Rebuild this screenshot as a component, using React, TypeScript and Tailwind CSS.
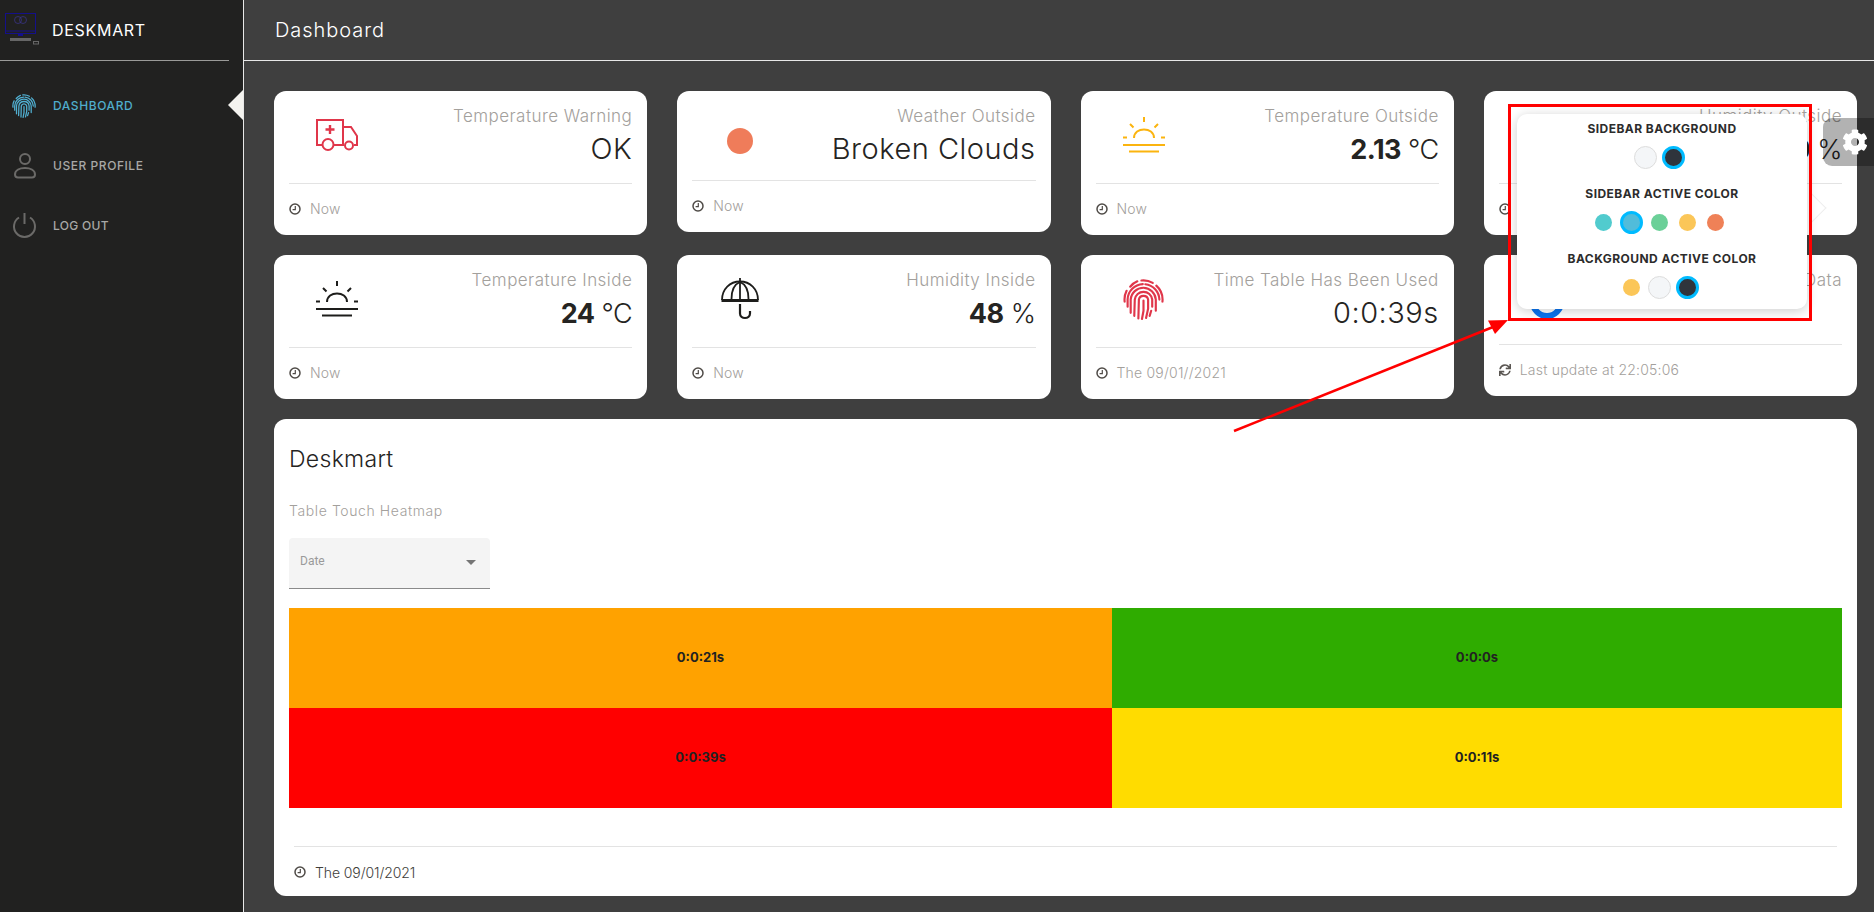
import type { ReactNode } from "react";
import { FaCog, FaSync } from "react-icons/fa";

const FONT = "[font-family:Inter,'Liberation_Sans',sans-serif]";

function ClockIcon({ className = "" }: { className?: string }) {
  return (
    <svg viewBox="0 0 12 12" className={`w-[12px] h-[12px] ${className}`} fill="none" stroke="#4f4b47">
      <circle cx="6" cy="6" r="5" strokeWidth="1.5" />
      <path d="M6.300 3V6.600H3.600" strokeWidth="1.200" />
    </svg>
  );
}

function FingerprintIcon({ color, className = "" }: { color: string; className?: string }) {
  return (
    <svg viewBox="0 0 40 40" className={className} fill="none" stroke={color} strokeWidth="2.100" strokeLinecap="round">
      <path d="M7 7.500A18.500 18.500 0 0 1 14 2.300" />
      <path d="M18 1.500A18.500 18.500 0 0 1 29 3.800" />
      <path d="M32.500 6.500A18.500 18.500 0 0 1 38.500 22" />
      <path d="M1.600 22A18.500 18.500 0 0 1 3.500 11.500" />
      <path d="M4.500 27V20A15.500 15.500 0 0 1 20 5A15.500 15.500 0 0 1 35.500 20V27" strokeDasharray="30 2.500 22" />
      <path d="M7.500 33V20A12.500 12.500 0 0 1 20 8.500A12.500 12.500 0 0 1 32 20V31" />
      <path d="M11 36L11.500 20A8.500 8.500 0 0 1 20 12.500A8.500 8.500 0 0 1 28.500 20V27M27.500 31L26 36" />
      <path d="M15 38.500L15.500 20A4.500 4.500 0 0 1 20 16.500A4.500 4.500 0 0 1 24.500 20V29L22.500 38" />
      <path d="M20 21V31L18.500 39" />
    </svg>
  );
}

function SunriseIcon({ color }: { color: string }) {
  return (
    <svg viewBox="0 0 42 36" className="w-[42px] h-[36px]" fill="none" stroke={color} strokeWidth="2">
      <path d="M21 0V5M7 7L10.500 10.500M35 7L31.500 10.500" />
      <path d="M11 21C11 9.500 31 9.500 31 21" />
      <path d="M0 20.500H4M38 20.500H42" />
      <path d="M0 28H42" />
      <path d="M6 34.500H36" />
    </svg>
  );
}

function AmbulanceIcon() {
  return (
    <svg viewBox="0 0 42 32" className="w-[42px] h-[32px]" fill="none" stroke="#e0364a" strokeWidth="2">
      <path d="M6 26H1V1H27V8H35L41 17V26H38" />
      <path d="M18 26H27V8M27 26H28" />
      <path d="M14 6V15M9.500 10.500H18.500" strokeWidth="2.400" />
      <circle cx="12" cy="25.500" r="5.500" fill="#fff" />
      <circle cx="33" cy="26.500" r="4" fill="#fff" />
    </svg>
  );
}

function UmbrellaIcon() {
  return (
    <svg viewBox="0 0 38 42" className="w-[38px] h-[42px]" fill="none" stroke="#1d1d1b" strokeWidth="1.800">
      <path d="M19 0V4" />
      <path d="M1 22C1 11 9 3.500 19 3.500S37 11 37 22" />
      <path d="M0.500 22.500H37.500" strokeWidth="3" />
      <path d="M10.500 21C10.500 12 14 6 19 4C24 6 27.500 12 27.500 21" />
      <path d="M19 4V21" />
      <path d="M19 26V35.500C19 41.500 29 41.500 29 35.500V33" strokeWidth="2.200" />
    </svg>
  );
}

type CardProps = {
  icon: ReactNode;
  title: string;
  value: ReactNode;
  footer: string;
  footerIcon?: ReactNode;
  bodyClass?: string;
  iconClass?: string;
};

function StatCard({ icon, title, value, footer, footerIcon, bodyClass = "h-[92px]", iconClass = "pt-[44px]" }: CardProps) {
  return (
    <div className="bg-white rounded-[12px] px-[15px]">
      <div className={`flex justify-between ${bodyClass}`}>
        <div className={`w-[96px] shrink-0 flex justify-center ${iconClass}`}>
          <div className="h-0 flex items-center">{icon}</div>
        </div>
        <div className="text-right pt-[14px]">
          <div className="text-[17px] leading-[22px] font-light text-[#a3a09c] tracking-[0.45px] whitespace-nowrap">{title}</div>
          <div className="text-[29px] leading-[34px] mt-[5px] font-light text-[#252422] tracking-[0.5px] whitespace-nowrap">{value}</div>
        </div>
      </div>
      <div className="border-t border-[#e3e3e3] h-[52px] pb-[2px] flex items-center gap-[8px] text-[14px] font-light text-[#a3a09c] tracking-[0.2px]">
        {footerIcon ?? <ClockIcon />}
        <span className="ml-[1px]">{footer}</span>
      </div>
    </div>
  );
}

function Bold({ n, unit }: { n: string; unit: string }) {
  return (
    <span className="text-[27px] tracking-[-0.5px]">
      <span className="font-bold">{n}</span> {unit}
    </span>
  );
}

function Swatch({ color, active = false, light = false }: { color: string; active?: boolean; light?: boolean }) {
  const size = active ? "w-[23px] h-[23px] border-[3px] border-[#00bbff]" : light ? "w-[23px] h-[23px] border border-[#dddddd]" : "w-[17px] h-[17px]";
  return (
    <div className="w-[28px] flex justify-center items-center">
      <div className={`rounded-full ${size}`} style={{ backgroundColor: color }} />
    </div>
  );
}

function SettingsPanel() {
  const heading = "text-[12px] leading-[16px] font-bold text-[#2c2c2c] text-center tracking-[0.45px] uppercase";
  const row = "flex justify-center items-center h-[23px] pr-[6px] mt-[9px]";
  return (
    <div className="absolute left-[1517px] top-[114px] w-[290px] h-[195px] bg-white rounded-[10px] shadow-[0_2px_12px_rgba(0,0,0,0.2)] pt-[7px]">
      <div className={heading}>Sidebar Background</div>
      <div className={row}>
        <Swatch color="#f4f6f8" light />
        <Swatch color="#2f343c" active />
      </div>
      <div className={`${heading} mt-[17px]`}>Sidebar Active Color</div>
      <div className={row}>
        <Swatch color="#51cbce" />
        <Swatch color="#51bcda" active />
        <Swatch color="#6bd098" />
        <Swatch color="#fbc658" />
        <Swatch color="#ef8157" />
      </div>
      <div className={`${heading} mt-[17px]`}>Background Active Color</div>
      <div className={row}>
        <Swatch color="#fbc658" />
        <Swatch color="#f4f6f8" light />
        <Swatch color="#2f343c" active />
      </div>
    </div>
  );
}

export default function App() {
  const navIconStroke = "#6b6a68";
  return (
    <div className={`relative w-[1874px] h-[912px] overflow-hidden flex bg-[#3f3f3f] ${FONT}`}>
      {/* sidebar */}
      <aside className="w-[244px] shrink-0 bg-[#212120] border-r border-[#e8e8e8]">
        <div className="h-[61px] w-[229px] border-b border-[#9a9a98] flex items-center pl-[5px]">
          <svg viewBox="0 0 36 32" className="w-[36px] h-[32px] -mt-[2px]" fill="none">
            <rect x="0.500" y="0.500" width="30" height="20" stroke="#14108a" />
            <path d="M0.500 18H30.500" stroke="#14108a" />
            <circle cx="13" cy="7" r="3.500" stroke="#3b3590" strokeWidth="0.700" />
            <circle cx="18" cy="7" r="3.500" stroke="#3b3590" strokeWidth="0.700" />
            <path d="M13 21H18V23H13Z" fill="#14108a" />
            <rect x="5" y="25" width="21" height="3" fill="#666" />
            <rect x="28.500" y="28.500" width="5" height="2.500" stroke="#666" />
          </svg>
          <span className="ml-[11px] text-[16px] text-white tracking-[0.7px] font-normal">DESKMART</span>
        </div>
        <nav className="relative pt-[15px]">
          <div className="h-[60px] flex items-center">
            <FingerprintIcon color="#51b0d2" className="ml-[12px] w-[24px] h-[24px]" />
            <span className="ml-[17px] text-[12px] text-[#4fadcc] font-medium tracking-[0.6px]">DASHBOARD</span>
          </div>
          <div className="h-[60px] flex items-center">
            <svg viewBox="0 0 24 26" className="ml-[13px] w-[24px] h-[26px]" fill="none" stroke={navIconStroke} strokeWidth="2">
              <circle cx="12" cy="6" r="5" />
              <path d="M2 21.500C2 17 7 15 12 15S22 17 22 21.500C22 24 20 24.500 19 24.500H5C4 24.500 2 24 2 21.500Z" />
            </svg>
            <span className="ml-[16px] text-[12px] text-[#a8a8a6] font-medium tracking-[0.55px]">USER PROFILE</span>
          </div>
          <div className="h-[60px] flex items-center">
            <svg viewBox="0 0 24 26" className="ml-[12px] w-[25px] h-[26px]" fill="none" stroke={navIconStroke} strokeWidth="2">
              <path d="M12 0V11" />
              <path d="M6.500 4.500A10.500 10.500 0 1 0 17.500 4.500" />
            </svg>
            <span className="ml-[16px] text-[12px] text-[#a8a8a6] font-medium tracking-[0.3px]">LOG OUT</span>
          </div>
          <div className="absolute right-0 top-[29px] w-0 h-0 border-y-[15px] border-y-transparent border-r-[15px] border-r-[#f4f3ef]" />
        </nav>
      </aside>

      {/* main */}
      <main className="flex-1 min-w-0">
        <header className="h-[61px] border-b border-[#e8e8e8] flex items-center pl-[31px] text-[20px] text-white tracking-[0.95px] font-light">
          Dashboard
        </header>
        <div className="pl-[30px] pr-[17px] pt-[30px]">
          <div className="grid grid-cols-4 gap-x-[30px] gap-y-[20px] items-start">
            <StatCard icon={<AmbulanceIcon />} title="Temperature Warning" value="OK" footer="Now" />
            <StatCard
              icon={<div className="w-[26px] h-[26px] rounded-full bg-[#ef7c5a]" />}
              title="Weather Outside"
              value="Broken Clouds"
              footer="Now"
              bodyClass="h-[89px]"
              iconClass="pt-[50px]"
            />
            <StatCard icon={<SunriseIcon color="#fbb40f" />} title="Temperature Outside" value={<Bold n="2.13" unit="°C" />} footer="Now" />
            <StatCard icon={null} title="Humidity Outside" value={<Bold n="80" unit="%" />} footer="Now" />
            <StatCard icon={<SunriseIcon color="#1d1d1b" />} title="Temperature Inside" value={<Bold n="24" unit="°C" />} footer="Now" />
            <StatCard icon={<UmbrellaIcon />} title="Humidity Inside" value={<Bold n="48" unit="%" />} footer="Now" />
            <StatCard
              icon={<FingerprintIcon color="#e0364a" className="w-[41px] h-[41px]" />}
              title="Time Table Has Been Used"
              value="0:0:39s"
              footer="The 09/01//2021"
            />
            <StatCard
              icon={
                <svg viewBox="0 0 34 34" className="w-[34px] h-[34px] mt-[6px]" fill="none" stroke="#0a74f0" strokeWidth="6">
                  <circle cx="17" cy="17" r="14" />
                </svg>
              }
              title="Update Data"
              value=""
              footer="Last update at 22:05:06"
              footerIcon={<FaSync className="w-[12px] h-[12px] text-[#5a5652]" />}
              bodyClass="h-[89px]"
            />
          </div>

          <section className="mt-[20px] h-[477px] bg-white rounded-[12px] px-[15px]">
            <h2 className="pt-[25px] text-[23px] leading-[30px] font-light text-[#252422] tracking-[0.3px]">Deskmart</h2>
            <p className="mt-[27px] text-[14px] leading-[20px] font-light text-[#a3a09c] tracking-[0.6px]">Table Touch Heatmap</p>
            <div className="mt-[17px] w-[201px] h-[51px] bg-[#f4f4f4] rounded-t-[4px] border-b border-[#8a8a8a] flex justify-between pl-[11px] pr-[14px] pt-[16px] [font-family:Roboto,sans-serif]">
              <span className="text-[12px] leading-[14px] text-[#9a9a9a]">Date</span>
              <span className="mt-[6px] w-0 h-0 border-x-[5px] border-x-transparent border-t-[5px] border-t-[#757575]" />
            </div>
            <div className="mt-[19px] grid grid-cols-[823px_1fr] grid-rows-[100px_100px] text-[13px] font-bold text-[#222222]">
              <div className="bg-[#ffa200] flex items-center justify-center">0:0:21s</div>
              <div className="bg-[#2fac00] flex items-center justify-center">0:0:0s</div>
              <div className="bg-[#ff0000] flex items-center justify-center">0:0:39s</div>
              <div className="bg-[#ffdc00] flex items-center justify-center">0:0:11s</div>
            </div>
            <div className="mt-[38px] mx-[5px] border-t border-[#e3e3e3] h-[51px] flex items-center gap-[9px] text-[14px] font-light text-[#403d39] tracking-[-0.1px]">
              <ClockIcon />
              <span>The 09/01/2021</span>
            </div>
          </section>
        </div>
      </main>

      {/* settings overlay + annotation */}
      <div className="absolute left-[1823px] top-[118px] w-[51px] h-[48px] bg-[rgba(0,0,0,0.3)] rounded-l-[9px] flex items-center justify-end pr-[6px]">
        <FaCog className="w-[26px] h-[26px] text-white" />
      </div>
      <div className="absolute left-[1800px] top-[197px] w-[22px] h-[22px] rotate-45 bg-white border-t border-r border-[#eeeeee]" />
      <SettingsPanel />
      <div className="absolute left-[1508px] top-[104px] w-[304px] h-[217px] border-[3px] border-[#ff0000]" />
      <svg className="absolute left-[1230px] top-[315px] w-[285px] h-[120px] pointer-events-none" viewBox="0 0 285 120" fill="none">
        <path d="M4 116L268 10" stroke="#ff0000" strokeWidth="2.500" />
        <path d="M278 5L258 5.500L265 19Z" fill="#ff0000" />
      </svg>
    </div>
  );
}
